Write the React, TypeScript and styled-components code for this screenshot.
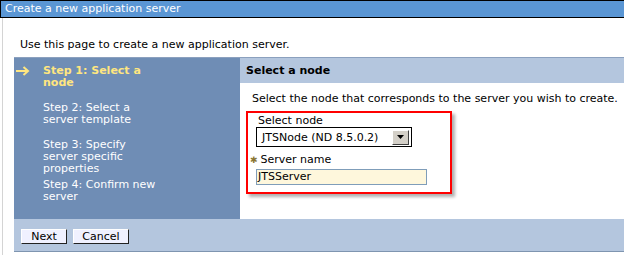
import { createGlobalStyle, styled } from 'styled-components';

const GlobalStyle = createGlobalStyle`
  html, body {
    margin: 0;
    padding: 0;
    background: #fff;
  }
  body {
    width: 624px;
    height: 255px;
    overflow: hidden;
    font-family: 'DejaVu Sans', Verdana, sans-serif;
    font-size: 11px;
    color: #000;
  }
`;

const steps = [
  { label: 'Step 1: Select a node', active: true },
  { label: 'Step 2: Select a server template', active: false },
  { label: 'Step 3: Specify server specific properties', active: false },
  { label: 'Step 4: Confirm new server', active: false },
];

const App = () => {
  return (
    <>
      <GlobalStyle />
      <TitleBar>Create a new application server</TitleBar>
      <Page>
        <Intro>Use this page to create a new application server.</Intro>
        <Wizard>
          <WizardBody>
            <StepList>
              {steps.map((s) => (
                <Step key={s.label} $active={s.active}>
                  <Marker>
                    {s.active && (
                      <svg width="14" height="10" viewBox="0 0 14 10">
                        <path d="M0 5h12M7.5 1l4.5 4-4.5 4" stroke="#ffe680" strokeWidth="2" fill="none" />
                      </svg>
                    )}
                  </Marker>
                  <StepText>{s.label}</StepText>
                </Step>
              ))}
            </StepList>
            <Content>
              <SectionHeader>Select a node</SectionHeader>
              <Description>Select the node that corresponds to the server you wish to create.</Description>
              <Highlight>
                <FieldLabel>Select node</FieldLabel>
                <Select>
                  <span>JTSNode (ND 8.5.0.2)</span>
                  <DropButton>
                    <svg width="7" height="4" viewBox="0 0 7 4">
                      <path d="M0 0h7L3.5 4z" fill="#000" />
                    </svg>
                  </DropButton>
                </Select>
                <RequiredLabel>
                  <Asterisk>✱</Asterisk>
                  <span>Server name</span>
                </RequiredLabel>
                <TextInput>JTSServer</TextInput>
              </Highlight>
            </Content>
          </WizardBody>
          <Footer>
            <Button $width={46}>Next</Button>
            <Button $width={56}>Cancel</Button>
          </Footer>
        </Wizard>
      </Page>
    </>
  );
};

const TitleBar = styled.div`
  height: 16px;
  line-height: 16px;
  border: 1px solid #000;
  border-right: none;
  background: #5a96d4;
  color: #fff;
  padding-left: 4px;
  white-space: nowrap;
`;

const Page = styled.div`
  margin-left: 2px;
  border-left: 1px solid #d4d4d4;
  height: 237px;
`;

const Intro = styled.div`
  padding: 20px 0 0 17px;
  height: 19px;
  line-height: 13px;
`;

const Wizard = styled.div`
  margin-left: 11px;
  border-top: 1px solid #8ba0be;
`;

const WizardBody = styled.div`
  display: flex;
`;

const StepList = styled.div`
  width: 226px;
  flex-shrink: 0;
  background: #6f8db5;
  padding: 7px 0 3px;
`;

const Step = styled.div<{ $active: boolean }>`
  display: flex;
  min-height: 33px;
  padding-bottom: 4px;
  line-height: 12px;
  color: ${(p) => (p.$active ? '#ffe680' : '#fff')};
  font-weight: ${(p) => (p.$active ? 'bold' : 'normal')};
`;

const Marker = styled.div`
  width: 27px;
  padding-left: 2px;
  flex-shrink: 0;
  padding-top: 1px;
`;

const StepText = styled.div`
  width: 118px;
`;

const Content = styled.div`
  flex: 1;
  background: #fff;
`;

const SectionHeader = styled.div`
  height: 25px;
  line-height: 25px;
  background: #b4c6de;
  font-weight: bold;
  padding-left: 6px;
`;

const Description = styled.div`
  padding: 9px 0 0 12px;
  line-height: 13px;
  white-space: nowrap;
`;

const Highlight = styled.div`
  margin: 6px 0 0 6px;
  width: 194px;
  height: 79px;
  border: 2px solid #f00;
  box-shadow: 3px 3px 3px #b0b0b0;
  padding-left: 8px;
`;

const FieldLabel = styled.div`
  line-height: 12px;
  padding: 2px 0 0 2px;
`;

const Select = styled.div`
  display: flex;
  align-items: center;
  justify-content: space-between;
  box-sizing: border-box;
  width: 156px;
  height: 20px;
  border: 1px solid #000;
  padding: 0 2px 0 5px;
`;

const DropButton = styled.div`
  display: flex;
  align-items: center;
  justify-content: center;
  width: 15px;
  height: 13px;
  background: #d4d0c8;
  border: 1px solid;
  border-color: #fff #404040 #404040 #fff;
`;

const RequiredLabel = styled.div`
  display: flex;
  align-items: center;
  margin: 7px 0 0 -6px;
  line-height: 12px;
  gap: 3px;
`;

const Asterisk = styled.span`
  color: #8a7632;
  font-size: 9px;
`;

const TextInput = styled.div`
  width: 171px;
  height: 16px;
  box-sizing: border-box;
  border: 1px solid #7f9db9;
  background: #fef7dc;
  line-height: 14px;
  padding-left: 1px;
  margin-top: 3px;
`;

const Footer = styled.div`
  display: flex;
  align-items: center;
  gap: 6px;
  height: 32px;
  background: #b4c6de;
  border-bottom: 1px solid #7f95b0;
  padding-left: 7px;
`;

const Button = styled.div<{ $width: number }>`
  width: ${(p) => p.$width}px;
  height: 15px;
  box-sizing: border-box;
  line-height: 13px;
  text-align: center;
  background: #f0f1ff;
  border: 1px solid;
  border-color: #fff #222 #222 #fff;
  margin-top: 3px;
`;

export default App;
